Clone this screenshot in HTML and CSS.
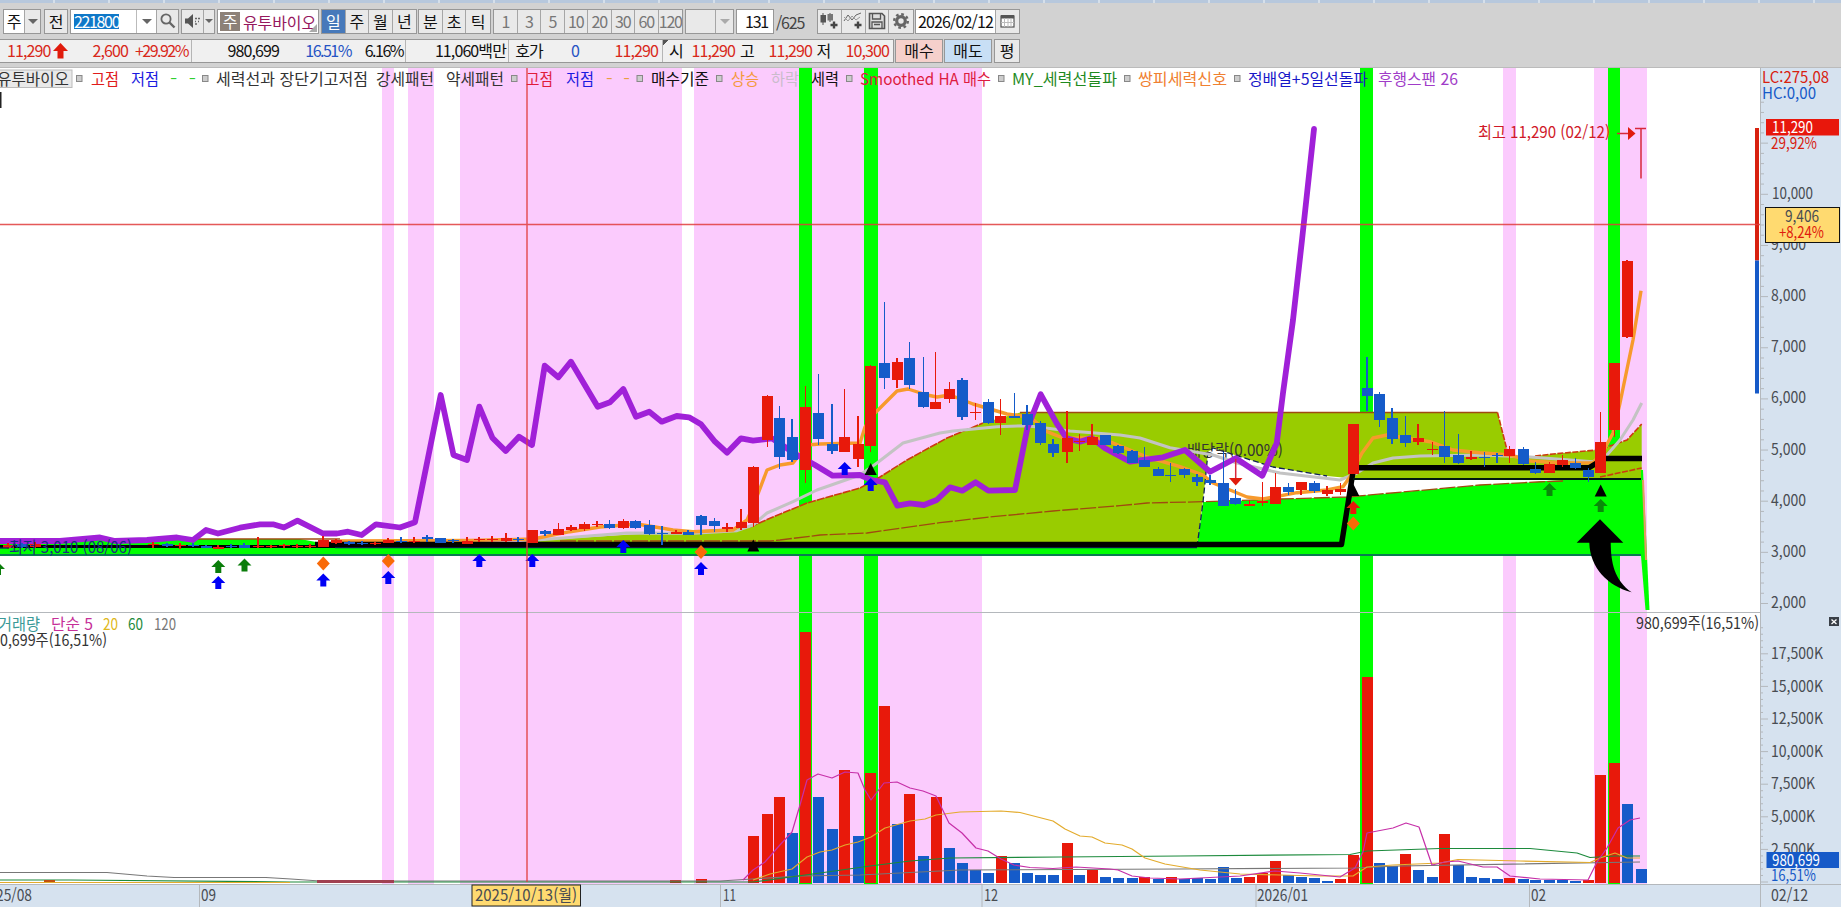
FILE: index.html
```html
<!DOCTYPE html>
<html lang="ko">
<head>
<meta charset="utf-8">
<title>유투바이오 221800</title>
<link rel="stylesheet" href="styles.css">
</head>
<body>
<div class="app">
<div class="tabstrip"></div>
<div class="toolbar">
  <div class="group g-market"><span class="cell white">주</span><span class="cell arrow"><i class="tri"></i></span></div>
  <div class="group g-prev"><span class="cell">전</span></div>
  <div class="group g-code"><span class="cell white code"><mark>221800</mark></span><span class="cell white arrow noborder"><i class="tri"></i></span><span class="cell"><svg width="18" height="18" viewBox="0 0 18 18"><circle cx="7" cy="7" r="4.6" fill="none" stroke="#666" stroke-width="1.8"/><path d="M10.5 10.5L15.5 15.5" stroke="#666" stroke-width="2.4"/></svg></span></div>
  <div class="group g-sound"><span class="cell"><svg width="18" height="16" viewBox="0 0 18 16"><path d="M1 5.5h3L9 1v14L4 10.500H1z" fill="#555"/><path d="M11 5.500h2M14 5.500h2M11 8.500h1M14 8.500h1M11 11h2" stroke="#666" stroke-width="1.500"/></svg></span><span class="cell arrow"><i class="tri small"></i></span></div>
  <div class="group g-name"><span class="badge">주</span><span class="name">유투바이오</span><i class="corner"></i></div>
  <div class="group g-period"><span class="cell on">일</span><span class="cell">주</span><span class="cell">월</span><span class="cell">년</span></div>
  <div class="group g-intra"><span class="cell">분</span><span class="cell">초</span><span class="cell">틱</span></div>
  <div class="group g-unit"><span class="cell">1</span><span class="cell">3</span><span class="cell">5</span><span class="cell">10</span><span class="cell">20</span><span class="cell">30</span><span class="cell">60</span><span class="cell">120</span></div>
  <div class="group g-combo"><span class="cell"></span><span class="cell arrow"><i class="tri pale"></i></span></div>
  <div class="group g-count"><span class="cell white right">131</span></div>
  <span class="total">/625</span>
  <div class="group g-tools">
    <span class="cell"><svg width="20" height="18" viewBox="0 0 20 18"><path d="M4 1v12M11 1v9" stroke="#555"/><rect x="1.500" y="3" width="5.500" height="7.500" fill="#555"/><rect x="8.500" y="2" width="5.500" height="6.500" fill="#777"/><path d="M15 9.500v7M11.500 13h7" stroke="#444" stroke-width="2.400"/></svg></span>
    <span class="cell"><svg width="20" height="18" viewBox="0 0 20 18"><path d="M1 9L5 3L9 8L13 3L18 1" fill="none" stroke="#666"/><path d="M1 5L5 9L9 4L13 8L17 5" fill="none" stroke="#999"/><path d="M15 9.500v7M11.500 13h7" stroke="#444" stroke-width="2.400"/></svg></span>
    <span class="cell"><svg width="18" height="18" viewBox="0 0 18 18"><path d="M1.500 1.500h12.500l2.500 2.500v12.500h-15z" fill="#ddd" stroke="#555" stroke-width="1.600"/><path d="M4.500 2v5h8V2M4 16v-6h10v6M6 12.500h6" fill="none" stroke="#555" stroke-width="1.300"/></svg></span>
    <span class="cell"><svg width="18" height="18" viewBox="0 0 18 18"><circle cx="9" cy="9" r="4.300" fill="none" stroke="#666" stroke-width="3.200"/><circle cx="9" cy="9" r="6.800" fill="none" stroke="#666" stroke-width="2.400" stroke-dasharray="2.670 2.670"/></svg></span>
  </div>
  <div class="group g-date"><span class="cell white date">2026/02/12</span><span class="cell"><svg width="15" height="14" viewBox="0 0 15 14"><rect x="1" y="2" width="13" height="11" fill="#fff" stroke="#555" stroke-width="1.200"/><rect x="1" y="1" width="13" height="3.500" fill="#555"/><path d="M4.500 4v9M8 4v9M11 4v9M1 8.500h13" stroke="#bbb"/></svg></span></div>
</div>
<div class="quote">
  <div class="strip">
    <span class="up">11,290</span>
    <svg class="upmark" width="15" height="16" viewBox="0 0 15 16"><path d="M7.500 0L15 8H10.500V15.500H4.500V8H0z" fill="#e01b0c"/></svg>
    <span class="up r">2,600</span>
    <span class="up r tight">+29.92%</span>
    <i class="sep"></i>
    <span class="r">980,699</span>
    <span class="down r tight">16.51%</span>
    <span class="r tight">6.16%</span>
    <i class="sep"></i>
    <span class="r">11,060백만</span>
    <i class="sep"></i>
    <span class="c">호가</span>
    <span class="down c">0</span>
    <span class="up r">11,290</span>
    <i class="sep fold"></i>
    <span class="c">시</span><span class="up r">11,290</span>
    <span class="c">고</span><span class="up r">11,290</span>
    <span class="c">저</span><span class="up r">10,300</span>
  </div>
  <span class="trade buy">매수</span>
  <span class="trade sell">매도</span>
  <span class="trade avg">평</span>
</div>
<div class="chart">
<svg class="plot" viewBox="0 68 1760 816" width="1760" height="816">
  <g id="bands" class="crisp"></g>
  <!-- cloud -->
  <path class="lime" d="M0 539H300L343 547H1197L1203 502L1280 499L1347 497L1480 485L1563 480L1641.500 479V555H0Z"/>
  <path class="white" d="M1197 543L1203 502L1205 483L1208 452L1213 448L1273 467L1327 476L1358 479H1545L1537 482L1480 485L1347 497L1280 499L1203 502Z"/>
  <path class="olive" d="M520 542L560 539L750 527L773 517L807 503L860 488L880 477L907 460L947 438L983 423L1020 412.500H1497.500L1507 450L1513 456L1535 456L1553 454L1597 450L1613 445L1627 440L1641.700 424V479H1358L1327 476L1273 467L1213 448L1208 452L1205 483L1197 547L1190 542Z"/>
  <path class="brown" d="M0 539H340"/>
  <path class="brown" d="M560 541H770L780 540L820 535L867 533L940 522.700L993 516.700L1053 511L1120 505.700L1147 503L1203 501.700L1280 499L1347 497L1480 485L1537 482L1563 481" stroke-dasharray="16 2"/>
  <path class="brown hot" d="M750 527L773 517L807 503L860 488L880 477L907 460L947 438L983 423" stroke-dasharray="8 1"/>
  <path class="brown" d="M1020 412.500H1497.500"/>
  <path class="brown hot" d="M1497.500 412.500L1507 450M1535 456L1553 454L1597 450L1613 445L1627 440L1641.700 424M1600 477L1641.700 468" stroke-dasharray="6 1.500"/>
  <path class="navy" d="M1197 547L1203 502L1205 483L1208 452L1213 448L1273 467L1327 476" stroke-dasharray="6 3"/>
  <path class="teal" d="M0 555H1641"/>
  <path class="lime" d="M1641 470H1643L1649.500 610H1645.500L1641 556Z"/><path d="M1643 480L1646 560" stroke="#e89a60" stroke-width="2"/>
  <text class="k" x="1187" y="456" textLength="96">배당락(0.00%)</text>
  <!-- moving averages and base line -->
  <path class="ma grey" d="M537 540L627 533L693 533.300L737 530.700L753 525L767 513L793 501.700L817 490L860 475L877 463L903 443L940 433L953 431L997 426.700L1027 425.700L1070 431L1120 435L1140 438L1170 447.700L1213 455L1237 463L1280 473L1340 480L1357 473L1373 463L1393 458L1420 456L1480 455L1530 457L1593 461.700L1607 455L1620 440L1633 420L1641.700 403"/>
  <path class="ma orange" d="M340 541L470 540.500L533 539L570 531.700L600 527L637 524L673 530L693 531.700L733 530L747 520L753 507L767 470L780 465L793 463L807 445L820 444L860 443L865 427L871 417L897 391L908 389L927 395L937 397L950 395L973 404L1007 414L1030 417L1047 431.700L1063 438L1095 438L1113 443L1147 457L1180 466.700L1203 475L1213 483L1230 490L1247 497L1263 499L1297 492.700L1327 490L1343 486.700L1350 476.700L1362 453L1373 438L1387 435L1430 441.700L1453 450L1480 452.700L1510 455L1530 461L1563 463L1593 463L1605 448L1613 433L1620 403L1633 340L1641 290.700"/>
  <path class="base thin" d="M0 546.500H335"/>
  <path class="navy" d="M335 547.700H1197"/>
  <path class="base" d="M315 544.500H1341.500L1353 472"/>
  <path class="base" d="M1358 467.700H1589L1604 458.500H1642"/>
  <path class="navy dark" d="M1353 479H1641"/>
  <path class="lag" d="M0 541L60 541L100 537.500L115 541L147 540L177 537.500L193 540L206 530L218 533.500L240 527.700L260 524.300H273L284 527.500L297.500 520.700L323 533.500H337L348 531.700L361.700 535L376 524.300L400 527.500L415 522.300L440.700 395L453.500 455L467 460L479.300 406.700L492.300 437.700L505.700 451L519 436.700L532 445L544.700 365.700L558.300 377.300L571 361.700L597.700 406.700L610 402.300L623.300 389L636 416.700L649.300 411.700L661.700 421.700L676.700 416L689 417.300L701 424.300L715 441.700L727 452.700L741 438.300L753 440.700L772 438.300L797 455L815 465L832.700 475.700L860 475L871.700 480L885 482.300L897.300 505.700L910 503.300L924 505L936.700 500L950 487.300L962.300 490.700L975.700 482.300L988.300 490.700L1015 490L1027.300 428.300L1040.700 394.300L1056.700 423.300L1066.700 438.300L1080 441.700L1091.700 438L1105 448.300L1130 461.700L1163 457.300L1185 450L1210 471.700L1235.700 458.300L1262.300 475.700L1276.700 443.300L1283 393L1293 320L1302 240L1314 129"/>
  <g id="candles" class="crisp"></g>
  <g id="marks"></g>
  <path class="red2" d="M1235.700 459V480"/><path d="M1229 478H1242.500L1235.700 485.500Z" fill="#e01b0c"/>
  <path d="M1600 519.300L1623.300 542.700H1610.700C1611 562 1614 580 1631.700 592.300C1608 586 1590 568 1589.300 542.700H1576.700Z"/>
  <text class="navytext" x="9" y="553" textLength="123">최저 3,010 (08/06)</text>
  <path class="navy" d="M0 548H9"/>
  <!-- high label -->
  <text class="redtext" x="1478" y="138" textLength="132">최고 11,290 (02/12)</text>
  <path class="red2" d="M1617 133.500H1629M1635 128.500H1646M1641 128.500V178.500"/><path d="M1628 127L1635.500 133.500L1628 140Z" fill="#e01b0c"/>
  <rect x="1755" y="128" width="4" height="132.500" fill="#d8210f"/><rect x="1755" y="260.500" width="4" height="133" fill="#165ac8"/>
  <!-- volume pane -->
  <path class="divider" d="M0 612.500H1760"/>
  <g id="volume" class="crisp"></g>
  <path class="vma" stroke="#777" d="M0 872.500H107L147 876L174 877.500H266L291 879L320 881H720L800 876L860 875L960 870L1180 869L1353 868L1400 866L1640 862"/>
  <path class="vma" stroke="#1c8a3c" d="M0 880H70L290 882H753L820 873L870 866L910 861L950 858L1060 857L1180 856L1350 854.500L1367 851L1440 848.500H1530L1577 853L1590 857.500L1615 856H1640"/>
  <path class="vma" stroke="#e3ab2c" d="M0 882.500H290M753 880L770 874L792 869L807 857L820 852L832 850L845 845L858 842L871 837L885 828L910 821L925 819L936 815L960 812L1001 811L1020 812.500L1053 821L1065 829L1080 836L1092 837L1105 843L1122 845L1132 849L1145 858L1165 864L1200 870L1240 874L1320 876H1353L1367 867L1393 865L1440 863L1458 859.500L1520 861L1590 862.500L1600 858L1615 853L1627 858H1640"/>
  <path class="vma" stroke="#c62fa8" d="M743 880L753 870L765 862L779 846L792 832L800 805L807 780L818 774L832 778L845 772L858 773L865 790L871 800L884 783L897 782L910 788L923 791L936 796L949 823L962 833L976 848L988 851L1001 859L1014 865L1030 867.500L1053 868.500L1076 867L1110 869L1118 870L1132 876L1150 878L1180 879L1240 876L1275 871L1300 873L1340 877L1355 868L1363 852L1367 833L1393 828L1406 823L1419 827L1432 865L1445 862L1458 861L1483 867H1497L1510 876L1540 879L1588 880L1597 862L1607 848L1618 828L1630 820L1640 818"/>
  <path d="M317 881.500H394" stroke="#a04050" stroke-width="3"/><path d="M44 881H55" stroke="#c05010" stroke-width="2"/>
  <g class="crosshair"><path d="M0 224.500H1760M527 68V882"/></g>
  <!-- indicator legend -->
  <rect x="-4" y="70" width="76" height="17.500" fill="#e9e9e9" stroke="#bbb"/>
  <path d="M0 92h1.500v16H0z" fill="#222"/>
  <g id="squares"></g>
  <g class="legend">
    <text x="-3" y="84.500" textLength="72" fill="#333">유투바이오</text>
    <text x="91" y="84.500" textLength="28" fill="#e01b1b">고점</text>
    <text x="131" y="84.500" textLength="28" fill="#1a1ae0">저점</text>
    <text x="170" y="84.500" textLength="26" fill="#2fd02f">-  -</text>
    <text x="216" y="84.500" textLength="152" fill="#333">세력선과 장단기고저점</text>
    <text x="376" y="84.500" textLength="58" fill="#333">강세패턴</text>
    <text x="446" y="84.500" textLength="58" fill="#333">약세패턴</text>
    <text x="526" y="84.500" textLength="27" fill="#e01b3b">고점</text>
    <text x="566" y="84.500" textLength="28" fill="#1a1ae0">저점</text>
    <text x="606" y="84.500" textLength="24" fill="#e8a040">-  -</text>
    <text x="651" y="84.500" textLength="58" fill="#111">매수기준</text>
    <text x="731" y="84.500" textLength="28" fill="#f39a3c">상승</text>
    <text x="771" y="84.500" textLength="28" fill="#c9bccb">하락</text>
    <text x="811" y="84.500" textLength="28" fill="#111">세력</text>
    <text x="860" y="84.500" textLength="131" fill="#dd1b40">Smoothed HA 매수</text>
    <text x="1012" y="84.500" textLength="105" fill="#1f8a1f">MY_세력선돌파</text>
    <text x="1138" y="84.500" textLength="89" fill="#f08030">쌍피세력신호</text>
    <text x="1248" y="84.500" textLength="120" fill="#1818c8">정배열+5일선돌파</text>
    <text x="1378" y="84.500" textLength="80" fill="#a03cc8">후행스팬 26</text>
    <text x="-2" y="629.500" textLength="42" fill="#3a9a98">거래량</text>
    <text x="51" y="629.500" textLength="42" fill="#c62f98">단순 5</text>
    <text x="103" y="629.500" textLength="15" fill="#e0b820">20</text>
    <text x="128" y="629.500" textLength="15" fill="#1c8a3c">60</text>
    <text x="154" y="629.500" textLength="22" fill="#777">120</text>
    <text x="0" y="645.500" textLength="107" fill="#333">0,699주(16,51%)</text>
    <text x="1636" y="628.500" textLength="123" fill="#333">980,699주(16,51%)</text>
  </g>
</svg>
<svg class="axis" viewBox="1760 68 81 839" width="81" height="839">
  <path class="divider" d="M1760.500 68V907M1760 884.500H1841"/>
  <g id="ticks"></g>
  <text x="1762" y="83" textLength="67" fill="#d8210f">LC:275,08</text>
  <text x="1762" y="98.500" textLength="54" fill="#165ac8">HC:0,00</text>
  <rect x="1766" y="119" width="73" height="16.500" fill="#e8170c"/>
  <text x="1772" y="133" textLength="41" fill="#fff">11,290</text>
  <text x="1771" y="148.500" textLength="46" fill="#d8210f">29,92%</text>
  <rect x="1765.500" y="207.500" width="74" height="35" fill="#ffda70" stroke="#111"/>
  <text x="1785" y="222" textLength="34">9,406</text>
  <text x="1779" y="237.500" textLength="45" fill="#e01b0c">+8,24%</text>
  <rect x="1829" y="617" width="10" height="9" fill="#3a3f47"/><path d="M1831.500 619.500L1836.500 624M1836.500 619.500L1831.500 624" stroke="#fff" stroke-width="1.300"/>
  <rect x="1766.500" y="852" width="72.500" height="16" fill="#165ac8"/>
  <text x="1772" y="866" textLength="48" fill="#fff">980,699</text>
  <text x="1771" y="881" textLength="45" fill="#165ac8">16,51%</text>
  <text x="1771" y="901" textLength="37">02/12</text>
</svg>
<svg class="dates" viewBox="0 884 1760 23" width="1760" height="23">
  <path class="divider" d="M0 884.500H1760M199.500 884V907M720.500 884V907M982 884V907M1256 884V907M1529.500 884V907"/>
  <text x="-4" y="901" textLength="36">25/08</text><text x="201" y="901" textLength="15">09</text>
  <text x="723" y="901" textLength="13">11</text><text x="984" y="901" textLength="14">12</text>
  <text x="1257" y="901" textLength="51">2026/01</text><text x="1531" y="901" textLength="15">02</text>
  <rect x="472" y="885" width="108.500" height="21" fill="#ffda70" stroke="#222"/>
  <text x="475" y="901" textLength="102">2025/10/13(월)</text>
</svg>
</div>
</div>
<script src="chart.js"></script>
</body>
</html>
```
FILE: styles.css
```css
* { box-sizing: border-box; }
body { margin: 0; overflow: hidden; background: #d2d2d2; font: 16px/1 "Noto Sans CJK KR", sans-serif; color: #111; }
.app { width: 1841px; height: 907px; display: flex; flex-direction: column; overflow: hidden; }
.tabstrip { height: 3px; flex: none; background: repeating-linear-gradient(90deg, #b7c8dd 0 53px, #d5dfea 53px 55px); }
.toolbar { height: 35px; flex: none; display: flex; align-items: center; padding: 2px 0 0 3px; font-size: 16px; }
.group { display: grid; height: 25px; border: 1px solid #979797; background: #e9e9e9; margin-right: 2px; white-space: nowrap; }
.cell { display: flex; align-items: center; justify-content: center; border-right: 1px solid #a6a6a6; min-width: 0; padding-bottom: 1px; overflow: hidden; }
.cell:last-child { border-right: 0; }
.white { background: #fff; }
.tri { border: 5px solid transparent; border-top: 5px solid #666; border-bottom: 0; }
.tri.small { border-width: 4px 4px 0; }
.tri.pale { border-top-color: #aaa; }
.g-market { width: 38px; grid-template-columns: 21px 1fr; margin-right: 3px; }
.g-prev { width: 24px; grid-template-columns: 1fr; }
.g-code { width: 109px; grid-template-columns: 66px 20px 1fr; margin-right: 2px; }
.code { justify-content: flex-start; padding-left: 3px; border-right-color: #bbb; }
.code mark { background: #0f78c8; color: #fff; letter-spacing: -1.350px; line-height: 15px; }
.g-sound { width: 34px; grid-template-columns: 22px 1fr; }
.g-name { width: 102px; grid-template-columns: 20px 1fr; background: #fff; padding: 2px; position: relative; align-items: center; }
.badge { background: #8d8178; color: #fff; height: 19px; text-align: center; line-height: 18px; }
.name { color: #96185e; padding-left: 3px; letter-spacing: -.1px; }
.corner { position: absolute; right: 1px; bottom: 1px; border: 4px solid; border-color: transparent #aaa #aaa transparent; }
.g-period { width: 96px; grid-template-columns: repeat(4, 1fr); margin-right: 1px; }
.on { background: #4779ba; color: #fff; }
.g-intra { width: 73px; grid-template-columns: repeat(3, 1fr); }
.g-unit { width: 190px; grid-template-columns: repeat(8, 1fr); color: #777; letter-spacing: -1.200px; }
.g-combo { width: 49px; grid-template-columns: 30px 1fr; }
.g-count { width: 38px; grid-template-columns: 1fr; letter-spacing: -1.200px; }
.right { justify-content: flex-end; padding-right: 5px; }
.total { width: 41px; color: #444; letter-spacing: -1.200px; }
.g-tools { width: 97px; grid-template-columns: repeat(4, 1fr); margin-right: 1px; }
.g-date { width: 105px; grid-template-columns: 80px 1fr; }
.date { letter-spacing: -.850px; }

.quote { height: 30px; flex: none; display: flex; align-items: flex-start; padding-top: 1px; border-bottom: 1px solid #bbb; white-space: nowrap; }
.strip { display: grid; width: 894px; height: 24px; align-items: center; background: #f0f0f0; border: 1px solid #979797; border-left: 0; letter-spacing: -.900px; padding-left: 7px;
  grid-template-columns: 46px 17px 58px 60px 6px 85px 72px 52px 4px 99px 4px 38px 54px 56px 10px 16px 51px 24px 53px 23px 54px; }
.strip span { padding-bottom: 2px; }
.strip .tight { letter-spacing: -1.500px; }
.r { text-align: right; }
.c { text-align: center; }
.up { color: #d8281a; }
.down { color: #2553c4; }
.sep { width: 1px; height: 22px; background: #b5b5b5; justify-self: center; }
.fold { width: 6px; background: linear-gradient(135deg, #555 0 4px, transparent 4px) no-repeat; border-left: 1px solid #b5b5b5; justify-self: end; }
.trade { height: 24px; border: 1px solid #979797; line-height: 20px; text-align: center; margin-left: 1px; width: 48px; }
.buy { background: #f5d0cb; }
.sell { background: #c8dff5; }
.avg { background: #e9e9e9; width: 26px; margin-left: 2px; }

.chart { flex: none; display: grid; grid-template: 816px 23px / 1760px 81px; background: #fff; }
.chart svg { display: block; overflow: hidden; }
.axis { grid-row: 1 / 3; grid-column: 2; background: #d6e2ef; }
.dates { grid-row: 2; grid-column: 1; background: #d6e2ef; }
text { font-size: 16px; white-space: pre; }
.axis text:not([fill]), .dates text { fill: #484c52; }
.crisp { shape-rendering: crispEdges; }
.lime { fill: #00ff00; }
.olive { fill: #99cc00; }
.white { fill: #fff; }
.chart path[class] { stroke-linejoin: round; }
.brown, .teal, .navy, .ma, .base, .lag, .vma, .divider, .red2, .crosshair path { fill: none; }
.brown { stroke: #a04a10; stroke-width: 1.300; }
.brown.hot { stroke: #cc3a10; stroke-width: 1.600; }
.teal { stroke: #0a7a50; stroke-width: 2; }
.navy { stroke: #10205a; stroke-width: 1.300; }
.navy.dark { stroke: #001810; stroke-width: 1.800; }
.ma { stroke-width: 3; }
.ma.grey { stroke: #c3c3c3; }
.ma.orange { stroke: #f79a2c; stroke-width: 3.400; }
.base { stroke: #000; stroke-width: 5.400; }
.base.thin { stroke-width: 3; }
.lag { stroke: #a020d8; stroke-width: 5.800; stroke-linecap: round; }
.vma { stroke-width: 1.200; }
.divider { stroke: #b4b8bc; }
.red2 { stroke: #d8283a; stroke-width: 1.500; }
.crosshair path { stroke: #e03c3c; stroke-width: 1.500; opacity: .85; }
.k { fill: #333; }
.navytext { fill: #1a2a80; }
.redtext { fill: #d01828; }
```
FILE: chart.js
```js
const NS = "http://www.w3.org/2000/svg";
const RED = "#e8190b", BLUE = "#155bc9";
function add(id, tag, attrs, text) {
  const el = document.createElementNS(NS, tag);
  for (const k in attrs) el.setAttribute(k, attrs[k]);
  if (text) el.textContent = text;
  document.getElementById(id).appendChild(el);
}
const rect = (id, x, y, w, h, fill) => add(id, "rect", { x, y, width: w, height: h, fill });

[[381.5, 394], [408, 434], [460, 681.5], [694, 981.5], [1503, 1516], [1594, 1646.5]]
  .forEach(([a, b]) => rect("bands", a, 68, b - a, 816, "#fbcbfd"));
[[799, 811.5], [864, 877.5], [1360, 1373], [1607.5, 1620]]
  .forEach(([a, b]) => rect("bands", a, 68, b - a, 816, "#00ff00"));

// x, colour, body top, body bottom, wick top, wick bottom
const candles = `8 r 545 548 543 549|22 b 544 547 543 548|35 r 544 547 542 548|153 r 544 545 542 548|167 b 544 546 543 547|180 r 545 546 543 549|193 b 545 546 543 547|206 b 546 548 545 548|218 r 546.5 549 545 549|231 b 546 547 544 548|244 b 545 548 543 548|258 r 546 547 537 548|271 r 546 547 545 548|284 r 545 546 544 548|297 r 546 547 544 548|310 r 546 547 544 548
323 r 540 547 536 547|336 r 540 543 539 544|349 b 542 544 541 545|362 b 543 544 541 545|375 r 543 544 542 545|388 r 540 543 538 543|401 b 541 542 537 543|414 r 541 542 537 543|427 b 537 539 535 542|440 b 538 543 538 543|453 b 540 541 539 543|467 r 541 543.7 537 544|479 r 539 540 537 542|492 r 539 540 536 542|506 r 538 541 533 542|518 b 539 540 537 542
532.7 r 530 543 530 543|545 b 531 534 530 536|558.5 r 529.3 534.7 523 535|571 r 526.7 530.3 525 531|584.5 r 524 529 522 531|597 r 524 525 521 527|609.5 b 524 527.7 520 529|623.3 r 520.7 528 519 529|635.7 b 520.7 528.3 520 529|649.3 b 525.3 534 520 535|662 b 533 534 526 545|676 r 531.7 533.7 530 534|688 b 531.7 535 530 535|701 b 515.7 525.3 515 535|714.3 b 521 526 518 532|727 r 527.3 529 523 532|741 r 521.7 527.7 509 530|753.3 r 466.7 523 466 527
767.3 r 395.7 440 395 447|779.5 b 418 456.7 406 469|792 b 437 460 419 462|805.7 r 406.7 470 386 483|818.3 b 413 439 374 445|832 b 444 451 404 454|844.7 r 437 451.7 389 452|858 r 444 459 416 467|870.7 r 365.7 446 365 452|884.5 b 363 378 302 389|897 r 362 380 358 388|909.5 b 358 385 342 389|923.5 b 392 406.7 357 408|935.5 r 402 409 352 409|949.3 r 389 399 382 403|962 b 380 416.7 378 420|975.7 r 412 413 403 420|988.3 b 402 423 399 424|1000.7 r 415.7 423 399 435|1014.3 b 415.7 417.7 393 418|1027 b 414 425 405 430|1040.7 b 423 443 420.7 445|1053 b 444 452.7 439 457|1067 r 438 451.7 411 463|1079.5 r 441 442 434 451|1092 r 437 444.7 424 445|1105.7 b 435 445 435 445|1118 b 446 453 445 454|1132 b 450.7 463 450 463|1144.7 b 460 466.7 447 467|1158.3 b 469 476 467 476|1170.7 b 475 476 463 482|1184.7 b 469 475 468 478|1197 b 477 482 474 486|1210 b 480 483 475 485
1223.3 b 483 506 452 506|1235.7 b 498 504 489 505|1249.5 r 504 506 500 506|1262.3 r 501 503 482 506|1275.7 r 486.7 503.7 473 504|1288.5 b 486.7 491.7 483 495|1301 r 482 490 482 495|1314.5 b 483 491 481 493|1327 r 490 494 486 496|1340.7 r 489.3 491.7 483 495|1353.3 r 424 473.7 424 474|1367 b 388 395.7 357 411|1379.5 b 394 420 392 427|1392 b 418 439 408 444|1405.7 b 435 442.7 416 447|1418 r 437.7 442 424 445|1432.3 r 448.5 449.5 442 455|1444.7 b 445.7 456.7 411 463|1458.3 b 455 462.7 434 464|1471 r 456.7 459 451 460|1484.5 b 457 458 452 467|1497 b 455 456 453 463|1509.5 r 449 456 446 463|1523.3 b 449 464 447 465|1535.5 b 469 472.7 462 474|1549.5 r 464 472.7 462 473|1562.3 r 459.7 465 455 467|1575.7 b 463 468 458 469|1588.3 b 470 477 468 482|1600.7 r 442 472.7 412 473|1614.3 r 363 430 363 437|1627 r 260.7 337 260 338`;
candles.split(/[|\n]/).forEach(row => {
  const [x, c, t, b, wt, wb] = row.split(" ");
  const col = c === "r" ? RED : BLUE;
  rect("candles", x - .6, wt, 1.2, wb - wt, col);
  rect("candles", x - 5.5, t, 11, Math.max(b - t, 1.3), col);
});

const volumes = "675 r 880|701 r 879|753.3 r 835.7|767 r 814|779.5 r 797|792 b 833|805.7 r 632|818.5 b 797|832 b 829|844.7 r 770|858.3 b 835.7|870.7 r 773|884.5 r 705.7|897 b 824|909.5 r 794|923.5 b 855.7|936 r 797|949.5 b 848|962 b 863|975.7 b 870|988.5 b 873|1001 r 855.7|1014.5 b 863|1027 b 873|1040.7 b 875|1053 b 875|1067 r 843|1079.5 b 875|1092 r 870|1105.7 b 877|1118 b 878|1132 b 878|1144.7 r 877|1158.5 b 878.7|1171 r 877|1184.5 b 879|1197 b 878|1210 b 879|1223.3 b 867|1236 b 878|1249.5 r 877|1262 r 873|1275.7 r 861|1288.5 b 875|1301 b 877|1314.5 b 878|1327 b 880.7|1340.7 r 879|1353 r 855|1367 r 676.7|1379.5 b 863|1392 b 865.7|1405.7 r 854|1418.5 b 870|1432 b 877|1444.7 r 834|1458.5 b 865|1471 b 877|1484.5 b 878|1497 b 879|1509.7 r 878|1523.5 b 879|1535.5 b 880|1549.5 b 880|1562.5 b 880|1575.7 b 881|1588.5 r 879.7|1600.7 r 775|1614.3 r 763|1627 b 804|1641 b 869";
volumes.split("|").forEach(row => {
  const [x, c, t] = row.split(" ");
  rect("volume", x - 5.5, t, 11, 883 - t, c === "r" ? RED : BLUE);
});

const shapes = {
  arrow: "M0 0L7 7H3V13H-3V7H-7Z",
  tri: "M0 0L6 12H-6Z",
  diamond: "M0 -7L6.5 0L0 7L-6.5 0Z"
};
[["arrow", -2, 562, "#0a7d0a"], ["arrow", 218.3, 560, "#0a7d0a"], ["arrow", 244.5, 558.5, "#0a7d0a"],
 ["arrow", 1549.5, 483, "#0a8a0a"], ["arrow", 1600.7, 499, "#0a8a0a"],
 ["arrow", 218.3, 576, "#0000f5"], ["arrow", 323.3, 573.5, "#0000f5"], ["arrow", 388.3, 571, "#0000f5"],
 ["arrow", 479.3, 554, "#0000f5"], ["arrow", 532.3, 554, "#0000f5"], ["arrow", 623.3, 540, "#0000f5"],
 ["arrow", 701, 562, "#0000f5"], ["arrow", 844.7, 462, "#0000f5"], ["arrow", 870.7, 478, "#0000f5"],
 ["arrow", 1353.3, 501, "#e8190b"],
 ["diamond", 323.3, 563.5, "#f96a08"], ["diamond", 388.3, 561, "#f96a08"], ["diamond", 701, 552, "#f96a08"], ["diamond", 1353.3, 523.5, "#f96a08"],
 ["tri", 753.3, 539.5, "#000"], ["tri", 870.7, 463, "#000"], ["tri", 1353.3, 484, "#000"], ["tri", 1600.7, 484.5, "#000"]
].forEach(([s, x, y, fill]) => add("marks", "path", { d: shapes[s], transform: `translate(${x} ${y})`, fill }));

[76.5, 202.5, 511.5, 637, 716.5, 846.5, 998.5, 1124.5, 1234.5].forEach(x =>
  add("squares", "rect", { x, y: 75.5, width: 5.5, height: 6, fill: "#ccc", stroke: "#888" }));

for (let i = 0; i <= 8; i++) {
  const y = 602.5 - i * 51.15;
  add("ticks", "text", { x: i === 8 ? 1772 : 1771, y: y + 5.5, textLength: i === 8 ? 41 : 35 }, (i + 2) + ",000");
}
for (let i = 0; i <= 52; i++) {
  const y = 603.5 - i * 10.23;
  if (y > 100) add("ticks", "path", { d: `M1761 ${y}h${i % 5 ? 3 : 7}`, stroke: "#b4b8bc" });
}
for (let i = 0; i <= 39; i++) {
  const y = 882 - i * 6.52;
  add("ticks", "path", { d: `M1761 ${y}h${i % 5 ? 2 : 7}`, stroke: "#b4b8bc" });
}
["2,500K", "5,000K", "7,500K", "10,000K", "12,500K", "15,000K", "17,500K"].forEach((t, i) =>
  add("ticks", "text", { x: 1771, y: 854.5 - i * 32.6, textLength: t.length > 6 ? 52 : 44 }, t));

document.querySelectorAll("text[textLength]").forEach(t => t.setAttribute("lengthAdjust", "spacingAndGlyphs"));
```
